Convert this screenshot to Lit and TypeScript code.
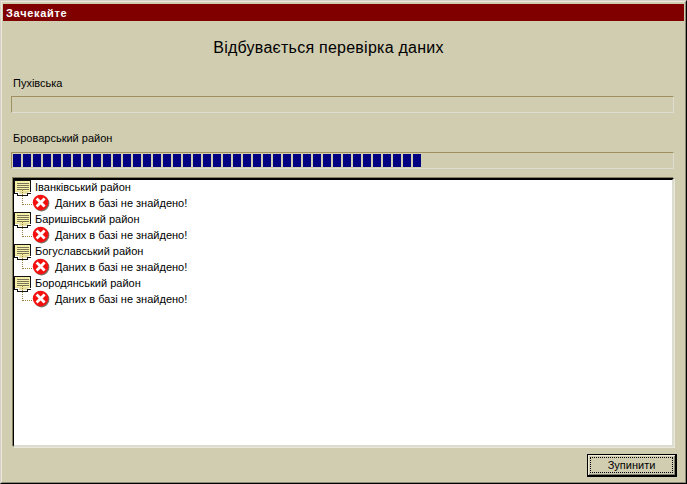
import { LitElement, html, css, svg } from "lit";
import { customElement } from "lit/decorators.js";

const groups = ["Іванківський район", "Баришівський район", "Богуславський район", "Бородянський район"];

const noteIcon = svg`<svg class="ico" width="18" height="16" viewBox="0 0 18 16" shape-rendering="crispEdges">
  <path d="M1 1h16v11H1z" fill="#f6efa6"/>
  <path d="M1 12h4v2h9v-2h3v-1H1z" fill="#e8e0a0"/>
  <path d="M0 .5h17M.5 0v13M16.5 1v11M0 13.5h3M14 13.5h3M3 15.5h11" stroke="#111" fill="none"/>
  <path d="M3 3.5h12M3 5.5h12M3 7.5h12M3 9.5h12" stroke="#77745a"/>
  <path d="M3.5 13v2M13.5 13v2" stroke="#111"/>
</svg>`;

const errIcon = svg`<svg class="ico" width="18" height="18" viewBox="0 0 18 18">
  <circle cx="9.6" cy="9.6" r="7.8" fill="#77756a"/>
  <circle cx="8.6" cy="8.6" r="7.8" fill="#f51010"/>
  <path d="M5.6 5.6l6 6M11.6 5.6l-6 6" stroke="#fff" stroke-width="2.8" stroke-linecap="square" fill="none"/>
</svg>`;

@customElement("app-root")
export class AppRoot extends LitElement {
  static styles = css`
    :host { display: block; width: 687px; height: 484px; font-family: "Liberation Sans", Arial, sans-serif; font-size: 11px; color: #000; }
    .win { box-sizing: border-box; width: 687px; height: 484px; background: #d0cdb0; display: flex; flex-direction: column;
      border-style: solid; border-width: 1px; border-color: #d4d0c8 #000 #000 #d4d0c8; }
    .win-inner { flex: 1; min-height: 0; display: flex; flex-direction: column; padding: 2px 1px 0 1px;
      border-style: solid; border-width: 1px; border-color: #ece9d8 #8c8a70 #8c8a70 #ece9d8; }
    .titlebar { height: 17px; flex: none; background: #800000; color: #fff; font-weight: 700; line-height: 18px; padding-left: 3px; letter-spacing: .7px; }
    .body { flex: 1; min-height: 0; display: flex; flex-direction: column; padding: 0 10px 0 7px; }
    h1 { margin: 0; height: 36px; padding-right: 27px; font-weight: 400; font-size: 16px; line-height: 53px; text-align: center; letter-spacing: .25px; flex: none; }
    .label { height: 16px; line-height: 16px; margin: 18px 0 0 3px; flex: none; }
    .label.two { margin-top: 17px; }
    .bar { box-sizing: border-box; height: 17px; margin: 5px 0 0 1px; flex: none; display: flex; gap: 2px; padding: 1px 0 1px 1px; align-items: stretch;
      border-style: solid; border-width: 1px; border-color: #a09060 #dcdcd0 #dcdcd0 #a09060; }
    .bar.filled { margin-top: 6px; }
    .block { width: 8px; background: #000080; }
    .tree { flex: none; box-sizing: border-box; height: 269px; margin: 9px 0 0 3px; background: #fff; padding: 0;
      border-style: solid; border-width: 2px 2px 2px 1px; border-color: #000 #dcdcd0 #dcdcd0 #000; box-shadow: -1px -1px 0 #858060, 1px 1px 0 #e8e8dc; }
    .row { height: 16px; display: flex; align-items: center; white-space: nowrap; }
    .row .ico { flex: none; }
    .group { align-items: flex-start; }
    .group span { margin-left: 3px; line-height: 14px; }
    .child .ico { margin-top: -2px; }
    .child span { margin-left: 5px; line-height: 14px; margin-top: -3px; }
    .elbow { flex: none; width: 10px; height: 16px; margin-left: 8px; box-sizing: border-box;
      border-left: 1px dotted #a08040; border-bottom: 1px dotted #a08040; transform: translateY(-7px); }
    .footer { flex: 1; display: flex; justify-content: flex-end; align-items: flex-start; padding-top: 7px; }
    button { box-sizing: border-box; width: 90px; height: 23px; margin-right: -3px; padding: 2px; background: #d0cdb0; font: inherit; color: #000;
      border-style: solid; border-width: 1px 2px 2px 1px; border-color: #000; box-shadow: inset 1px 1px 0 #ece9d8, inset -1px -1px 0 #808070; }
    button span { display: block; height: 100%; box-sizing: border-box; border: 1px dotted #000; line-height: 14px; }
  `;

  render() {
    return html`<div class="win"><div class="win-inner">
      <div class="titlebar">Зачекайте</div>
      <div class="body">
        <h1>Відбувається перевірка даних</h1>
        <div class="label">Пухівська</div>
        <div class="bar"></div>
        <div class="label two">Броварський район</div>
        <div class="bar filled">${Array.from({ length: 41 }, () => html`<div class="block"></div>`)}</div>
        <div class="tree">
          ${groups.map((g) => html`
            <div class="row group">${noteIcon}<span>${g}</span></div>
            <div class="row child"><div class="elbow"></div>${errIcon}<span>Даних в базі не знайдено!</span></div>
          `)}
        </div>
        <div class="footer"><button><span>Зупинити</span></button></div>
      </div>
    </div></div>`;
  }
}
